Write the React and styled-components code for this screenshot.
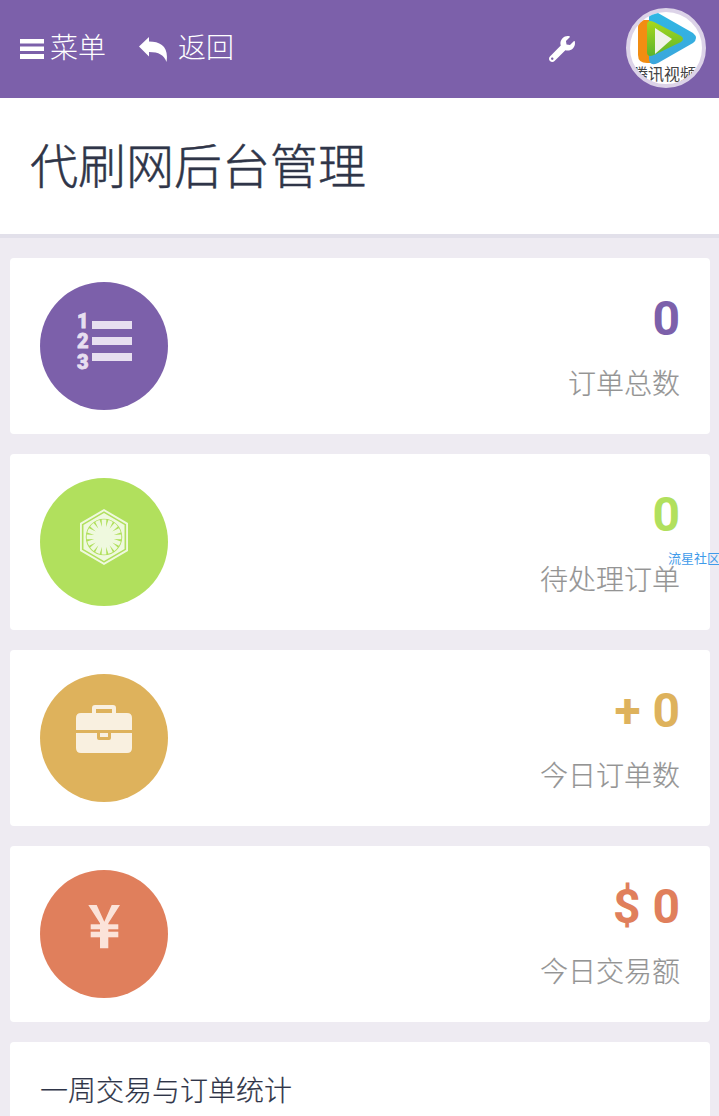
import React from "react";
import styled, { createGlobalStyle } from "styled-components";
import { FaWrench, FaFirstOrder } from "react-icons/fa";

const Global = createGlobalStyle`
  html, body { margin: 0; padding: 0; height: 1116px; overflow: hidden; background: #eeebf2; }
  body { font-family: Roboto, "Noto Sans CJK SC", sans-serif; }
  * { box-sizing: border-box; }
`;

const Page = styled.div`
  width: 719px;
  height: 1116px;
  overflow: hidden;
  background: #eeebf2;
`;
const Header = styled.header`
  height: 98px;
  background: #7c60aa;
  display: flex;
  align-items: center;
  padding: 0 13px 0 20px;
  color: #fff;
`;
const NavItem = styled.div`
  display: flex;
  align-items: center;
  gap: ${(p) => p.$gap}px;
  margin-right: ${(p) => p.$mr}px;
  font-size: 28px;
  font-weight: 300;
  line-height: 1;
`;
const Spacer = styled.div`
  flex: 1;
`;
const Tool = styled.div`
  display: flex;
  margin-right: 51px;
`;
const Avatar = styled.div`
  position: relative;
  width: 80px;
  height: 80px;
  border-radius: 50%;
  background: #fff;
  border: 4px solid #dcd3e8;
  overflow: hidden;
  margin-top: -2px;
`;
const AvatarText = styled.span`
  position: absolute;
  left: 2px;
  top: 54px;
  font-size: 16px;
  font-weight: 400;
  line-height: 18px;
  white-space: nowrap;
  color: #444;
`;
const TitleBar = styled.div`
  height: 140px;
  background: #fff;
  border-bottom: 4px solid #e2e0ea;
  display: flex;
  align-items: center;
  padding: 0 30px 6px;
  font-size: 48px;
  font-weight: 300;
  -webkit-text-stroke: 0.5px #2f3548;
  color: #2f3548;
`;
const Cards = styled.main`
  display: flex;
  flex-direction: column;
  gap: 20px;
  padding: 20px 9px 0 10px;
`;
const Card = styled.section`
  height: 176px;
  background: #fff;
  border-radius: 4px;
  display: flex;
  justify-content: space-between;
  padding: 24px 30px;
`;
const Circle = styled.div`
  width: 128px;
  height: 128px;
  border-radius: 50%;
  background: ${(p) => p.$color};
  display: flex;
  align-items: center;
  justify-content: center;
  color: rgba(255, 255, 255, 0.8);
`;
const Raised = styled.div`
  display: flex;
  margin-bottom: ${(p) => p.$by}px;
`;
const Stats = styled.div`
  text-align: right;
`;
const Value = styled.div`
  font-size: 48px;
  font-weight: 700;
  line-height: 56px;
  margin-top: 9px;
  color: ${(p) => p.$color};
`;
const Label = styled.div`
  font-size: 28px;
  font-weight: 300;
  -webkit-text-stroke: 0.2px #949494;
  line-height: 40px;
  margin-top: 18px;
  color: #949494;
`;
const Watermark = styled.span`
  position: absolute;
  left: 668px;
  top: 551px;
  font-size: 13px;
  line-height: 16px;
  color: #3f9bea;
  white-space: nowrap;
`;
const ChartCard = styled.section`
  height: 120px;
  background: #fff;
  border-radius: 4px;
  padding: 30px 30px;
  font-size: 28px;
  font-weight: 300;
  -webkit-text-stroke: 0.2px #2f3548;
  line-height: 40px;
  color: #2f3548;
`;
const Numeral = styled.text`
  font-family: Roboto, sans-serif;
  font-weight: 900;
  font-size: 20px;
  stroke: #e7dff0;
  stroke-width: 0.8px;
`;

const BarsIcon = () => (
  <svg width="24" height="20" viewBox="0 0 24 20" fill="#fff">
    <rect y="0" width="24" height="4.5" />
    <rect y="7.5" width="24" height="4.5" />
    <rect y="15" width="24" height="5" />
  </svg>
);

const ReplyIcon = () => (
  <svg width="28" height="25" viewBox="0 0 28 25" fill="#fff">
    <path d="M0 9.5 L10 0 V4.5 C22 4.5 30 10 27.5 25 C25 18 20 15 10 15 V19.5 Z" />
  </svg>
);

const ListIcon = () => (
  <svg width="58" height="84" viewBox="0 -8 58 84" fill="#e7dff0">
    <Numeral x="2" y="15.5">1</Numeral>
    <Numeral x="2" y="35.5">2</Numeral>
    <Numeral x="2" y="56.5">3</Numeral>
    <rect x="17" y="9" width="40" height="8" />
    <rect x="17" y="25" width="40" height="8" />
    <rect x="17" y="41" width="40" height="8" />
  </svg>
);

const CaseIcon = () => (
  <svg width="56" height="48" viewBox="0 0 56 48" fill="#f9f0e0">
    <path d="M16 8 V3 Q16 0 19 0 H37 Q40 0 40 3 V8 H36 V4 H20 V8 Z" />
    <path d="M5 8 H51 Q56 8 56 13 V25 H0 V13 Q0 8 5 8 Z" />
    <path d="M0 28 H21 V33 Q21 35 23 35 H33 Q35 35 35 33 V28 H56 V43 Q56 48 51 48 H5 Q0 48 0 43 Z" />
    <rect x="24" y="28" width="8" height="4" />
  </svg>
);

const YenIcon = () => (
  <svg width="32" height="45" viewBox="0 0 32 45" fill="#fbe3d9">
    <path d="M0.3 1 H8.7 L16.3 17.7 L23.7 1 H32 L20.3 19.3 V44.3 H12 V19.3 Z" />
    <rect x="2.7" y="20.3" width="27.6" height="5" />
    <rect x="2.7" y="27.7" width="27.6" height="5.6" />
  </svg>
);

const Logo = () => (
  <svg width="72" height="58" viewBox="0 0 72 58">
    <defs>
      <linearGradient id="leaf" x1="0" y1="0" x2="0" y2="1">
        <stop offset="0" stopColor="#a8d81c" />
        <stop offset="1" stopColor="#5cb52c" />
      </linearGradient>
      <linearGradient id="sky" x1="0" y1="0" x2="0" y2="1">
        <stop offset="0" stopColor="#2fb7e4" />
        <stop offset="1" stopColor="#3ca6dc" />
      </linearGradient>
    </defs>
    <path d="M14 8 Q8 8 8 15 L8 43 Q8 51 17 51 L26 51 L26 8 Z" fill="#f28d12" />
    <path d="M19 5 Q19 -2 28 1 L63 21 Q69 26 63 31 L28 51 Q19 55 19 46 Z" fill="url(#sky)" />
    <path d="M17 13 Q17 7 24 10 L51 24 Q55 27 51 30 L24 43 Q17 46 17 40 Z" fill="url(#leaf)" />
    <path d="M25 16 L42 27 L25 42 Z" fill="#f0f3ea" />
  </svg>
);

export default function App() {
  return (
    <Page>
      <Global />
      <Header>
        <NavItem $gap={6} $mr={33}>
          <BarsIcon />
          <span>菜单</span>
        </NavItem>
        <NavItem $gap={11} $mr={0}>
          <ReplyIcon />
          <span>返回</span>
        </NavItem>
        <Spacer />
        <Tool>
          <FaWrench size={26} />
        </Tool>
        <Avatar>
          <Logo />
          <AvatarText>腾讯视频</AvatarText>
        </Avatar>
      </Header>
      <TitleBar>代刷网后台管理</TitleBar>
      <Cards>
        <Card>
          <Circle $color="#7c60aa">
            <ListIcon />
          </Circle>
          <Stats>
            <Value $color="#7c60aa">0</Value>
            <Label>订单总数</Label>
          </Stats>
        </Card>
        <Card>
          <Circle $color="#b1e05d">
            <Raised $by={10}>
              <FaFirstOrder size={56} />
            </Raised>
          </Circle>
          <Stats>
            <Value $color="#b1e05d">0</Value>
            <Label>待处理订单</Label>
          </Stats>
        </Card>
        <Card>
          <Circle $color="#deb25c">
            <Raised $by={18}>
              <CaseIcon />
            </Raised>
          </Circle>
          <Stats>
            <Value $color="#deb25c">+ 0</Value>
            <Label>今日订单数</Label>
          </Stats>
        </Card>
        <Card>
          <Circle $color="#e07f5c">
            <Raised $by={15}>
              <YenIcon />
            </Raised>
          </Circle>
          <Stats>
            <Value $color="#e07f5c">$ 0</Value>
            <Label>今日交易额</Label>
          </Stats>
        </Card>
        <ChartCard>一周交易与订单统计</ChartCard>
      </Cards>
      <Watermark>流星社区</Watermark>
    </Page>
  );
}
